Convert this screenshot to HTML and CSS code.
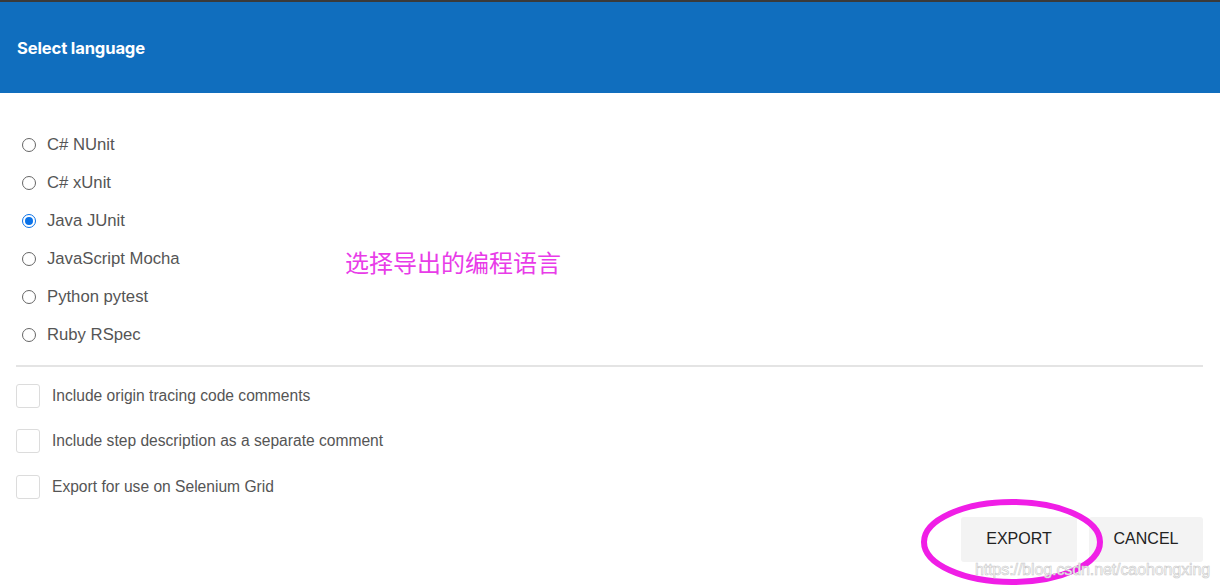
FILE: index.html
```html
<!DOCTYPE html>
<html lang="en">
  <head>
    <meta charset="UTF-8" />
    <title>Select language</title>
    <link rel="stylesheet" href="styles.css">
  </head>
  <body>
    <div class="dialog">
      <div class="header">
        <h1>Select language</h1>
      </div>

      <div class="content">
        <!-- 言語選択 -->
        <div class="radio-list">
          <label class="radio-row"><span class="radio"></span>C# NUnit</label>
          <label class="radio-row"><span class="radio"></span>C# xUnit</label>
          <label class="radio-row"><span class="radio checked"></span>Java JUnit</label>
          <label class="radio-row"><span class="radio"></span>JavaScript Mocha</label>
          <label class="radio-row"><span class="radio"></span>Python pytest</label>
          <label class="radio-row"><span class="radio"></span>Ruby RSpec</label>
        </div>

        <div class="divider"></div>

        <!-- オプション -->
        <div class="check-list">
          <label class="check-row"><span class="checkbox"></span>Include origin tracing code comments</label>
          <label class="check-row"><span class="checkbox"></span>Include step description as a separate comment</label>
          <label class="check-row"><span class="checkbox"></span>Export for use on Selenium Grid</label>
        </div>

        <div class="footer">
          <button class="btn">EXPORT</button>
          <button class="btn">CANCEL</button>
        </div>
      </div>

      <div class="note">选择导出的编程语言</div>
      <svg class="circle-mark" width="190" height="92" viewBox="0 0 190 92">
        <ellipse cx="94" cy="46" rx="88" ry="40" fill="none" stroke="#f01ee6" stroke-width="6" />
      </svg>
      <div class="watermark">https://blog.csdn.net/caohongxing</div>
    </div>
  </body>
</html>
```

FILE: styles.css
```css
* {
  margin: 0;
  padding: 0;
  box-sizing: border-box;
}

body {
  background: #fff;
  font-family: "Liberation Sans", Arial, sans-serif;
  color: #555;
  width: 1220px;
  height: 586px;
  overflow: hidden;
}

.dialog {
  position: relative;
  height: 586px;
  border-top: 2px solid #3a3a3a;
}

.header {
  background: #106ebe;
  height: 91px;
  display: flex;
  align-items: center;
  padding-left: 17px;
}

.header h1 {
  color: #fff;
  font-family: "Inter", "Liberation Sans", sans-serif;
  font-size: 16.6px;
  font-weight: 700;
  letter-spacing: -0.15px;
}

.content {
  padding: 33px 17px 0 16px;
}

.radio-list {
  display: flex;
  flex-direction: column;
}

.radio-row {
  display: flex;
  align-items: center;
  height: 38px;
  font-size: 16.7px;
  color: #555;
  padding-left: 6px;
}

.radio {
  width: 14px;
  height: 14px;
  border: 1px solid #666;
  border-radius: 50%;
  margin-right: 11px;
  position: relative;
  background: #fff;
}

.radio.checked {
  border-color: #0a72e8;
}

.radio.checked::after {
  content: '';
  position: absolute;
  top: 2px;
  left: 2px;
  width: 8px;
  height: 8px;
  border-radius: 50%;
  background: #0a72e8;
}

.divider {
  height: 2px;
  background: #e4e4e4;
  margin: 11px 0 0 0;
}

.check-list {
  display: flex;
  flex-direction: column;
  padding-top: 6px;
}

.check-row {
  display: flex;
  align-items: center;
  height: 45.5px;
  font-size: 15.6px;
  color: #555;
}

.checkbox {
  width: 24px;
  height: 24px;
  border: 1px solid #dcdcdc;
  border-radius: 3px;
  margin-right: 12px;
}

.footer {
  display: flex;
  justify-content: flex-end;
  gap: 12px;
  margin-top: 7px;
}

.btn {
  background: #f3f3f3;
  border: none;
  border-radius: 3px;
  height: 45px;
  width: 114px;
  font-family: "Liberation Sans", Arial, sans-serif;
  font-size: 16px;
  color: #222;
}

.btn:first-child {
  width: 116px;
}

.note {
  position: absolute;
  left: 345px;
  top: 245px;
  font-family: "Noto Sans CJK SC", sans-serif;
  font-size: 24px;
  line-height: 30px;
  color: #e83ce8;
}

.circle-mark {
  position: absolute;
  left: 918px;
  top: 494px;
}

.watermark {
  position: absolute;
  left: 975px;
  top: 559px;
  font-size: 16px;
  color: #fff;
  -webkit-text-stroke: 0.6px #c8c8c8;
  letter-spacing: -0.1px;
}
```
